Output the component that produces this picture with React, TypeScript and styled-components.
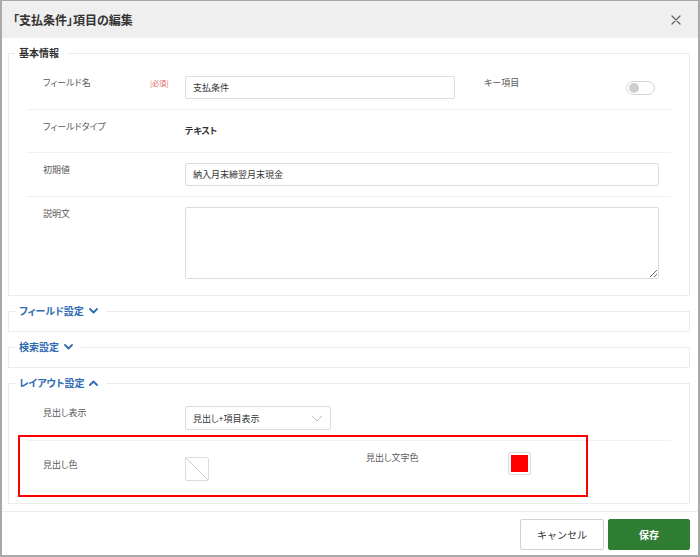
import React from 'react'
import styled, { createGlobalStyle } from 'styled-components'

const GlobalStyle = createGlobalStyle`
  html, body {
    margin: 0;
    padding: 0;
    background: #fff;
  }
  body {
    font-family: "Noto Sans CJK JP", "Noto Sans", sans-serif;
    font-feature-settings: "palt";
    color: #333;
  }
  * {
    box-sizing: border-box;
  }
`

const Dialog = styled.div`
  width: 700px;
  height: 557px;
  display: flex;
  flex-direction: column;
  border: 2px solid #a9a9a9;
  border-top-width: 1px;
  background: #fff;
`

const Header = styled.div`
  height: 37px;
  flex-shrink: 0;
  display: flex;
  align-items: center;
  justify-content: space-between;
  padding: 0 14px 0 11px;
  background: #efefef;
`

const Title = styled.h1`
  margin: 0;
  font-size: 12px;
  font-weight: 700;
  color: #333;
`

const CloseButton = styled.button`
  width: 16px;
  height: 16px;
  padding: 0;
  border: none;
  background: none;
  display: flex;
  align-items: center;
  justify-content: center;
  cursor: pointer;
`

const Body = styled.div`
  flex: 1;
  padding: 8px 8px 6px 6px;
`

const Section = styled.fieldset<{ $collapsed?: boolean }>`
  margin: 0 0 8px;
  padding: 0 0 ${(p) => (p.$collapsed ? '13px' : '6px')};
  border: 1px solid #ebebeb;
  min-width: 0;
  &:last-child {
    margin-bottom: 0;
  }
`

const Legend = styled.legend<{ $accent?: boolean }>`
  margin-left: 6px;
  padding: 0 8px 0 4px;
  display: flex;
  align-items: center;
  gap: 5px;
  line-height: 14px;
  font-size: 10px;
  font-weight: 700;
  color: ${(p) => (p.$accent ? '#2f6bb3' : '#333')};
`

const Rows = styled.div`
  margin: 0 18px;
  padding-top: 6px;
`

const Row = styled.div`
  position: relative;
  display: flex;
  align-items: flex-start;
  padding: 10px 0 10px 16px;
  & + & {
    border-top: 1px solid #f0f0f0;
  }
`

const LabelCell = styled.div<{ $offset?: number }>`
  width: 142px;
  flex-shrink: 0;
  display: flex;
  line-height: 14px;
  padding-top: ${(p) => p.$offset ?? 0}px;
`

const Label = styled.span`
  width: 107px;
  font-size: 9px;
  color: #595959;
`

const Required = styled.span`
  font-size: 7px;
  color: #e06666;
`

const TextInput = styled.input<{ $width: number }>`
  width: ${(p) => p.$width}px;
  height: 23px;
  padding: 0 7px;
  border: 1px solid #dcdcdc;
  border-radius: 2px;
  font-family: inherit;
  font-size: 9px;
  color: #333;
  outline: none;
`

const TextArea = styled.textarea`
  width: 474px;
  height: 72px;
  padding: 5px 7px;
  border: 1px solid #dcdcdc;
  border-radius: 2px;
  font-family: inherit;
  font-size: 9px;
  outline: none;
  display: block;
`

const StaticValue = styled.div`
  line-height: 22px;
  font-size: 9px;
  font-weight: 700;
  color: #333;
`

const SideLabel = styled.div<{ $gap: number; $width: number }>`
  margin-left: ${(p) => p.$gap}px;
  width: ${(p) => p.$width}px;
  flex-shrink: 0;
  line-height: 14px;
  font-size: 9px;
  color: #595959;
`

const Toggle = styled.div`
  margin-top: 5px;
  width: 29px;
  height: 14px;
  border: 1px solid #d6d6d6;
  border-radius: 7px;
  background: #fff;
  display: flex;
  align-items: center;
  padding-left: 2px;
  &::before {
    content: '';
    width: 10px;
    height: 10px;
    border-radius: 50%;
    background: #cfcfcf;
  }
`

const SelectBox = styled.div`
  width: 146px;
  height: 24px;
  display: flex;
  align-items: center;
  justify-content: space-between;
  padding: 0 7px 0 7px;
  border: 1px solid #dcdcdc;
  border-radius: 2px;
  font-size: 9px;
  color: #333;
`

const SwatchCell = styled.div<{ $width?: number; $offset?: number }>`
  width: ${(p) => (p.$width ? `${p.$width}px` : 'auto')};
  flex-shrink: 0;
  padding-top: ${(p) => p.$offset ?? 0}px;
`

const Swatch = styled.div<{ $color?: string; $size: number }>`
  width: ${(p) => p.$size}px;
  height: ${(p) => p.$size}px;
  border: 1px solid #dcdcdc;
  border-radius: 2px;
  padding: 2px;
  background: #fff;
  display: flex;
  &::after {
    content: '';
    flex: 1;
    background: ${(p) => p.$color ?? 'transparent'};
  }
`

const EmptySwatch = styled.div`
  width: 24px;
  height: 24px;
  border: 1px solid #dcdcdc;
  border-radius: 2px;
  background: linear-gradient(
    to top right,
    transparent calc(50% - 0.6px),
    #cfcfcf 50%,
    transparent calc(50% + 0.6px)
  );
`

const Highlight = styled.div`
  position: absolute;
  top: -6px;
  left: -9px;
  width: 570px;
  height: 62px;
  border: 2px solid #ff0000;
  pointer-events: none;
`

const Footer = styled.div`
  flex-shrink: 0;
  height: 44px;
  display: flex;
  justify-content: flex-end;
  gap: 4px;
  padding: 7px 8px 0;
  border-top: 1px solid #ededed;
`

const Button = styled.button<{ $primary?: boolean }>`
  width: ${(p) => (p.$primary ? 82 : 84)}px;
  height: 31px;
  border: 1px solid ${(p) => (p.$primary ? '#2e7d32' : '#d2d2d2')};
  border-radius: 2px;
  background: ${(p) => (p.$primary ? '#2e7d32' : '#fff')};
  color: ${(p) => (p.$primary ? '#fff' : '#333')};
  font-family: inherit;
  font-size: 10px;
  font-weight: ${(p) => (p.$primary ? 700 : 400)};
  cursor: pointer;
`

const Chevron = ({ up }: { up?: boolean }) => (
  <svg width="9" height="6" viewBox="0 0 9 6">
    <path
      d={up ? 'M1 5 L4.5 1.5 L8 5' : 'M1 1 L4.5 4.5 L8 1'}
      fill="none"
      stroke="#2f6bb3"
      strokeWidth="1.8"
      strokeLinecap="round"
      strokeLinejoin="round"
    />
  </svg>
)

const SelectChevron = () => (
  <svg width="12" height="7" viewBox="0 0 12 7">
    <path d="M1 1 L6 6 L11 1" fill="none" stroke="#bdbdbd" strokeWidth="1" />
  </svg>
)

const App = () => {
  return (
    <>
      <GlobalStyle />
      <Dialog>
        <Header>
          <Title>「支払条件」項目の編集</Title>
          <CloseButton aria-label="close">
            <svg width="10" height="10" viewBox="0 0 10 10">
              <path d="M1 1 L9 9 M9 1 L1 9" stroke="#666" strokeWidth="1.3" strokeLinecap="round" />
            </svg>
          </CloseButton>
        </Header>
        <Body>
          <Section>
            <Legend>基本情報</Legend>
            <Rows>
              <Row>
                <LabelCell>
                  <Label>フィールド名</Label>
                  <Required>[必須]</Required>
                </LabelCell>
                <TextInput $width={270} value="支払条件" readOnly />
                <SideLabel $gap={29} $width={142}>キー項目</SideLabel>
                <Toggle />
              </Row>
              <Row>
                <LabelCell>
                  <Label>フィールドタイプ</Label>
                </LabelCell>
                <StaticValue>テキスト</StaticValue>
              </Row>
              <Row>
                <LabelCell>
                  <Label>初期値</Label>
                </LabelCell>
                <TextInput $width={474} value="納入月末締翌月末現金" readOnly />
              </Row>
              <Row>
                <LabelCell>
                  <Label>説明文</Label>
                </LabelCell>
                <TextArea readOnly />
              </Row>
            </Rows>
          </Section>
          <Section $collapsed>
            <Legend $accent>
              フィールド設定 <Chevron />
            </Legend>
          </Section>
          <Section $collapsed>
            <Legend $accent>
              検索設定 <Chevron />
            </Legend>
          </Section>
          <Section>
            <Legend $accent>
              レイアウト設定 <Chevron up />
            </Legend>
            <Rows>
              <Row>
                <LabelCell>
                  <Label>見出し表示</Label>
                </LabelCell>
                <SelectBox>
                  <span>見出し+項目表示</span>
                  <SelectChevron />
                </SelectBox>
              </Row>
              <Row style={{ height: 57 }}>
                <Highlight />
                <LabelCell $offset={7}>
                  <Label>見出し色</Label>
                </LabelCell>
                <SwatchCell $width={181} $offset={6}>
                  <EmptySwatch />
                </SwatchCell>
                <SideLabel $gap={0} $width={142}>見出し文字色</SideLabel>
                <SwatchCell $offset={1}>
                  <Swatch $size={23} $color="#ff0000" />
                </SwatchCell>
              </Row>
            </Rows>
          </Section>
        </Body>
        <Footer>
          <Button>キャンセル</Button>
          <Button $primary>保存</Button>
        </Footer>
      </Dialog>
    </>
  )
}

export default App
